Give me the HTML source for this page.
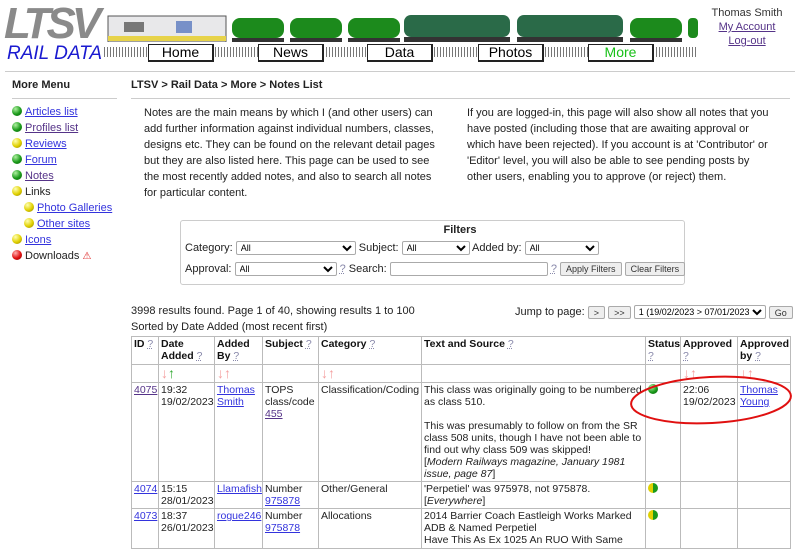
<!DOCTYPE html>
<html><head><meta charset="utf-8"><style>
*{margin:0;padding:0;box-sizing:border-box}
body{width:800px;height:541px;overflow:hidden;background:#fff;font-family:"Liberation Sans",Arial,sans-serif;font-size:11px;color:#222;position:relative}
.a{position:absolute}
a{color:#3333dd;text-decoration:underline}
.btn{position:absolute;top:44px;width:66px;height:18px;border:1px solid #222;border-right-width:2px;border-bottom-width:2px;background:#fff;font-size:14px;text-align:center;line-height:15px;color:#000}
.hr{position:absolute;height:1px;background:#ccc}
.ball{display:inline-block;width:10px;height:10px;border-radius:50%;vertical-align:-1px;margin-right:3px}
.g{background:radial-gradient(circle at 35% 30%,#aef0a0,#1a9a1a 55%,#0a5a0a)}
.y{background:radial-gradient(circle at 35% 30%,#ffffb0,#e0d000 55%,#8a7a00)}
.r{background:radial-gradient(circle at 35% 30%,#ffb0b0,#e01010 55%,#800000)}
.menu div{height:16px;line-height:16px}
p.t{position:absolute;font-size:11px;line-height:16px;color:#222}
table{position:absolute;left:131px;top:336px;border-collapse:collapse;table-layout:fixed;width:659px}
td,th{border:1px solid #bbb;vertical-align:top;padding:1px 2px;font-size:10.5px;line-height:12px;text-align:left;overflow:hidden}
th{font-weight:bold;color:#111}
.q{color:#88a;font-weight:normal;text-decoration:underline dotted}
.ar{color:#f4a0a0;font-size:14px;font-weight:bold;line-height:14px}
select,input,.sb{font-family:"Liberation Sans",Arial,sans-serif;font-size:9px;height:14px;border:1px solid #aaa;background:#fff;border-radius:2px;vertical-align:middle}
.sb{background:#eee;display:inline-block;padding:0 5px;line-height:12px;color:#333}
</style></head><body>
<div class="a" style="left:4px;top:4px;font:italic bold 44px/40px 'Liberation Sans',sans-serif;color:#8a8a8a;letter-spacing:-4px">LTSV</div>
<div class="a" style="left:7px;top:44px;font:italic 19px/19px 'Liberation Sans',sans-serif;color:#1a1ad0">RAIL DATA</div>
<svg class="a" style="left:104px;top:10px" width="594" height="52">
<rect x="4" y="6" width="118" height="26" fill="#e8e8ea" stroke="#555"/>
<rect x="4" y="26" width="118" height="5" fill="#e7d34a"/>
<rect x="20" y="12" width="20" height="10" fill="#777"/>
<rect x="72" y="11" width="16" height="12" fill="#7790c8"/>
<g fill="#1c8a1c"><rect x="128" y="8" width="52" height="20" rx="8"/><rect x="186" y="8" width="52" height="20" rx="8"/><rect x="244" y="8" width="52" height="20" rx="8"/><rect x="526" y="8" width="52" height="20" rx="8"/><rect x="584" y="8" width="10" height="20" rx="4"/></g>
<g fill="#2a6a48"><rect x="300" y="5" width="106" height="22" rx="7"/><rect x="413" y="5" width="106" height="22" rx="7"/></g>
<g fill="#333"><rect x="128" y="28" width="52" height="4"/><rect x="186" y="28" width="52" height="4"/><rect x="244" y="28" width="52" height="4"/><rect x="300" y="27" width="106" height="5"/><rect x="413" y="27" width="106" height="5"/><rect x="526" y="28" width="52" height="4"/></g>
<rect x="0" y="32" width="594" height="3" fill="#6a5a4a"/>
<line x1="0" y1="42" x2="594" y2="42" stroke="#777" stroke-dasharray="1 2" stroke-width="10"/>
</svg>
<div class="a" style="left:104px;top:42px;width:594px;height:3px;background:#fff"></div>
<div class="btn" style="left:148px">Home</div>
<div class="btn" style="left:258px">News</div>
<div class="btn" style="left:367px">Data</div>
<div class="btn" style="left:478px">Photos</div>
<div class="btn" style="left:588px;color:#18c018">More</div>
<div class="a" style="left:700px;top:6px;width:94px;text-align:center;line-height:14px;font-size:11px;color:#333">Thomas Smith<br><a style="color:#553388">My Account</a><br><a style="color:#553388">Log-out</a></div>
<div class="hr" style="left:5px;top:71px;width:790px"></div>
<div class="a" style="left:12px;top:79px;font-weight:bold">More Menu</div>
<div class="hr" style="left:12px;top:98px;width:105px"></div>
<div class="a" style="left:131px;top:79px;font-weight:bold">LTSV &gt; Rail Data &gt; More &gt; Notes List</div>
<div class="hr" style="left:131px;top:98px;width:659px"></div>
<div class="a menu" style="left:12px;top:104px">
<div><span class="ball g"></span><a>Articles list</a></div>
<div><span class="ball g"></span><a style="color:#553388">Profiles list</a></div>
<div><span class="ball y"></span><a>Reviews</a></div>
<div><span class="ball g"></span><a>Forum</a></div>
<div><span class="ball g"></span><a style="color:#553388">Notes</a></div>
<div><span class="ball y"></span>Links</div>
<div style="padding-left:12px"><span class="ball y"></span><a>Photo Galleries</a></div>
<div style="padding-left:12px"><span class="ball y"></span><a>Other sites</a></div>
<div><span class="ball y"></span><a>Icons</a></div>
<div><span class="ball r"></span>Downloads <span style="color:#d22;font-size:10px">⚠</span></div>
</div>
<p class="t" style="left:144px;top:105px;width:300px">Notes are the main means by which I (and other users) can add further information against individual numbers, classes, designs etc. They can be found on the relevant detail pages but they are also listed here. This page can be used to see the most recently added notes, and also to search all notes for particular content.</p>
<p class="t" style="left:467px;top:105px;width:305px">If you are logged-in, this page will also show all notes that you have posted (including those that are awaiting approval or which have been rejected). If you account is at 'Contributor' or 'Editor' level, you will also be able to see pending posts by other users, enabling you to approve (or reject) them.</p>
<div class="a" style="left:180px;top:220px;width:505px;height:65px;border:1px solid #ccc;border-radius:3px"></div>
<div class="a" style="left:180px;top:224px;width:560px;text-align:center;font-weight:bold">Filters</div>
<div class="a" style="left:185px;top:241px;white-space:nowrap">Category: <select style="width:120px"><option>All</option></select> Subject: <select style="width:68px"><option>All</option></select> Added by: <select style="width:74px"><option>All</option></select></div>
<div class="a" style="left:185px;top:262px;white-space:nowrap">Approval: <select style="width:102px"><option>All</option></select> <span class="q">?</span> Search: <input style="width:158px"> <span class="q">?</span> <span class="sb">Apply Filters</span> <span class="sb">Clear Filters</span></div>
<div class="a" style="left:131px;top:305px">3998 results found. Page 1 of 40, showing results 1 to 100</div>
<div class="a" style="left:131px;top:321px">Sorted by Date Added (most recent first)</div>
<div class="a" style="left:515px;top:305px;white-space:nowrap">Jump to page: <span class="sb" style="height:13px">&gt;</span> <span class="sb" style="height:13px">&gt;&gt;</span> <select style="width:132px"><option>1 (19/02/2023 &gt; 07/01/2023)</option></select> <span class="sb" style="height:13px">Go</span></div>
<table>
<colgroup><col style="width:27px"><col style="width:56px"><col style="width:48px"><col style="width:56px"><col style="width:103px"><col style="width:224px"><col style="width:35px"><col style="width:57px"><col style="width:53px"></colgroup>
<tr style="height:28px"><th>ID <span class="q">?</span></th><th>Date Added <span class="q">?</span></th><th>Added By <span class="q">?</span></th><th>Subject <span class="q">?</span></th><th>Category <span class="q">?</span></th><th>Text and Source <span class="q">?</span></th><th>Status <span class="q">?</span></th><th>Approved <span class="q">?</span></th><th>Approved by <span class="q">?</span></th></tr>
<tr style="height:17px"><td></td><td><span class="ar">↓</span><span class="ar" style="color:#3a3">↑</span></td><td><span class="ar">↓↑</span></td><td></td><td><span class="ar">↓↑</span></td><td></td><td></td><td><span class="ar">↓↑</span></td><td><span class="ar">↓↑</span></td></tr>
<tr style="height:97px"><td><a style="color:#553388">4075</a></td><td>19:32 19/02/2023</td><td><a>Thomas Smith</a></td><td>TOPS class/code <a style="color:#553388">455</a></td><td>Classification/Coding</td><td>This class was originally going to be numbered as class 510.<br><br>This was presumably to follow on from the SR class 508 units, though I have not been able to find out why class 509 was skipped!<br>[<i>Modern Railways magazine, January 1981 issue, page 87</i>]</td><td><span class="ball g"></span></td><td>22:06 19/02/2023</td><td><a>Thomas Young</a></td></tr>
<tr style="height:25px"><td><a>4074</a></td><td>15:15 28/01/2023</td><td><a>Llamafish</a></td><td>Number <a>975878</a></td><td>Other/General</td><td>'Perpetiel' was 975978, not 975878. [<i>Everywhere</i>]</td><td><span class="ball" style="background:linear-gradient(90deg,#e0d000 50%,#1a9a1a 50%)"></span></td><td></td><td></td></tr>
<tr style="height:40px"><td><a>4073</a></td><td>18:37 26/01/2023</td><td><a>rogue246</a></td><td>Number <a>975878</a></td><td>Allocations</td><td>2014 Barrier Coach Eastleigh Works Marked ADB &amp; Named Perpetiel<br>Have This As Ex 1025 An RUO With Same</td><td><span class="ball" style="background:linear-gradient(90deg,#e0d000 50%,#1a9a1a 50%)"></span></td><td></td><td></td></tr>
</table>
<svg class="a" style="left:620px;top:368px" width="180" height="70"><ellipse cx="91" cy="32" rx="80" ry="23" fill="none" stroke="#e01010" stroke-width="2" transform="rotate(-3 91 32)"/></svg>
</body></html>
